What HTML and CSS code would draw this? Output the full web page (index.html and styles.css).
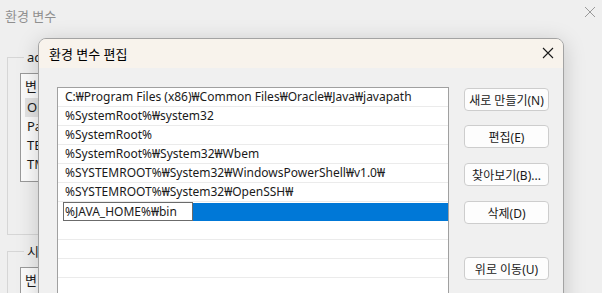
FILE: index.html
```html
<!DOCTYPE html>
<html lang="en">

<head>
    <meta charset="UTF-8">
    <meta name="viewport" content="width=device-width, initial-scale=1.0">
    <title>환경 변수 편집</title>
    <link rel="stylesheet" href="styles.css">
</head>

<body>

    <div class="desktop">

        <!-- 뒤쪽 창: 환경 변수 -->
        <div class="mainWindow">
            <div class="mainTitle">
                <span>환경 변수</span>
                <svg class="mainClose" width="12" height="12" viewBox="0 0 12 12">
                    <path d="M1 1L11 11M11 1L1 11" stroke="#9a9a9a" stroke-width="1" fill="none" />
                </svg>
            </div>

            <!-- solo se ve la franja izquierda, el resto queda bajo el dialogo -->
            <div class="mainGrupos">
                <fieldset class="grupo grupoUsuario">
                    <legend>adm</legend>
                    <div class="listaVar">
                        <div class="cabecera">변</div>
                        <div class="filaVar activa">Or</div>
                        <div class="filaVar">Pa</div>
                        <div class="filaVar">TE</div>
                        <div class="filaVar">TM</div>
                    </div>
                </fieldset>

                <fieldset class="grupo grupoSistema">
                    <legend>시스</legend>
                    <div class="listaVar">
                        <div class="cabecera">변</div>
                    </div>
                </fieldset>
            </div>
        </div>

        <!-- 대화상자: 환경 변수 편집 -->
        <div class="dialogo">
            <div class="dialogoTitulo">
                <span>환경 변수 편집</span>
                <svg class="cerrar" width="12" height="12" viewBox="0 0 12 12">
                    <path d="M1 1L11 11M11 1L1 11" stroke="#1a1a1a" stroke-width="1.1" fill="none" />
                </svg>
            </div>

            <div class="dialogoCuerpo">
                <div class="listaRutas">
                    <div class="ruta">C:₩Program Files (x86)₩Common Files₩Oracle₩Java₩javapath</div>
                    <div class="ruta">%SystemRoot%₩system32</div>
                    <div class="ruta">%SystemRoot%</div>
                    <div class="ruta">%SystemRoot%₩System32₩Wbem</div>
                    <div class="ruta">%SYSTEMROOT%₩System32₩WindowsPowerShell₩v1.0₩</div>
                    <div class="ruta">%SYSTEMROOT%₩System32₩OpenSSH₩</div>
                    <div class="ruta editando">
                        <input type="text" class="editor" value="%JAVA_HOME%₩bin">
                        <div class="seleccion"></div>
                    </div>
                    <div class="ruta"></div>
                    <div class="ruta"></div>
                    <div class="ruta"></div>
                    <div class="ruta"></div>
                </div>

                <div class="botones">
                    <button>새로 만들기(N)</button>
                    <button>편집(E)</button>
                    <button>찾아보기(B)...</button>
                    <button>삭제(D)</button>
                    <button class="separado">위로 이동(U)</button>
                </div>
            </div>
        </div>

    </div>

</body>

</html>
```

FILE: styles.css
```css
body {
    margin: 0px;
    background: #efefef;
    font-family: "Noto Sans", "Noto Sans CJK KR", sans-serif;
    font-size: 12px;
    color: #1a1a1a;
}

.desktop {
    position: relative;
    width: 602px;
    height: 293px;
    overflow: hidden;
}

/* ventana de atras */
.mainWindow {
    width: 602px;
    height: 293px;
}

.mainTitle {
    height: 35px;
    display: flex;
    align-items: center;
    justify-content: space-between;
    padding: 0px 6px 4px 5px;
    box-sizing: border-box;
    color: #8f8f8f;
    font-size: 13px;
}

.mainClose {
    margin-top: -8px;
}

.mainGrupos {
    width: 39px;
    overflow: hidden;
}

.grupo {
    margin: 14px 0px 0px 7px;
    width: 540px;
    border: 1px solid #d6d6d6;
    padding: 7px 12px 0px 12px;
    box-sizing: border-box;
}

.grupo legend {
    padding: 0px 3px;
    margin-left: 4px;
    font-size: 13px;
    line-height: 17px;
    color: #1a1a1a;
    white-space: nowrap;
}

.grupoUsuario {
    height: 186px;
}

.grupoSistema {
    margin-top: 8px;
    height: 60px;
}

.listaVar {
    border: 1px solid #9a9a9a;
    background: #fbfbfb;
    height: 109px;
    box-sizing: border-box;
    font-size: 13px;
}

.listaVar .cabecera {
    height: 24px;
    line-height: 24px;
    padding-left: 4px;
}

.listaVar .filaVar {
    height: 19px;
    line-height: 19px;
    margin-left: 4px;
    padding-left: 2px;
}

.listaVar .activa {
    background: #e3e3e3;
}

/* dialogo */
.dialogo {
    position: absolute;
    left: 38px;
    top: 38px;
    width: 526px;
    height: 300px;
    box-sizing: border-box;
    border: 1px solid #a3a3a3;
    border-radius: 8px 8px 0px 0px;
    background: #f0f0f0;
    box-shadow: 0px 4px 22px rgba(0, 0, 0, 0.18);
    overflow: hidden;
}

.dialogoTitulo {
    height: 29px;
    display: flex;
    align-items: center;
    justify-content: space-between;
    padding: 0px 9px 0px 10px;
    background: #f8f3ec;
    font-size: 13px;
    color: #000;
}

.cerrar {
    margin-top: -2px;
}

.dialogoCuerpo {
    display: flex;
    gap: 15px;
    padding: 19px 14px 0px 18px;
}

.listaRutas {
    width: 392px;
    height: 220px;
    border: 1px solid #a0a0a0;
    border-bottom: none;
    background: white;
    box-sizing: border-box;
}

.ruta {
    height: 19px;
    line-height: 18px;
    border-bottom: 1px solid #ebebeb;
    padding-left: 7px;
    box-sizing: border-box;
    white-space: nowrap;
}

.ruta.editando {
    display: flex;
    padding-left: 5px;
    border-bottom: none;
}

.editor {
    width: 130px;
    height: 19px;
    margin: 0px;
    padding: 0px 0px 0px 1px;
    border: 1px solid #6b6b6b;
    box-sizing: border-box;
    font-family: inherit;
    font-size: 12px;
    color: #1a1a1a;
    outline: none;
}

.seleccion {
    flex: 1;
    margin-top: 1px;
    height: 18px;
    background: #0078d7;
}

.botones {
    display: flex;
    flex-direction: column;
    gap: 15px;
    margin-top: 1px;
}

.botones button {
    width: 85px;
    height: 23px;
    padding: 0px;
    border: 1px solid #cdcdcd;
    border-radius: 4px;
    background: #fdfdfd;
    font-family: inherit;
    font-size: 12px;
    color: #1a1a1a;
}

.botones button:first-child {
    margin-bottom: -1px;
}

.botones .separado {
    margin-top: 18px;
}
```
